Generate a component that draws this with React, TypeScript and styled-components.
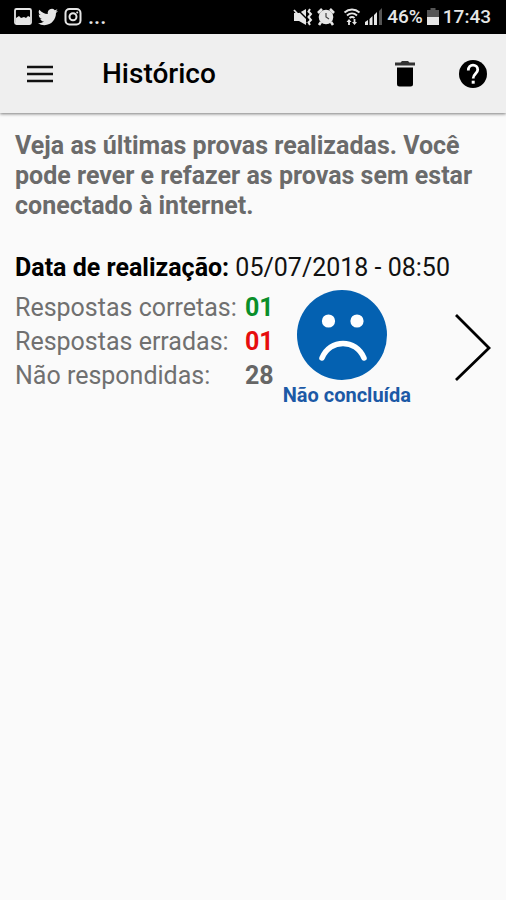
import React from 'react';
import styled, { createGlobalStyle } from 'styled-components';

const GlobalStyle = createGlobalStyle`
  *, *::before, *::after { box-sizing: border-box; }
  html, body { margin: 0; background: #fafafa; }
  body { font-family: Roboto, "Liberation Sans", sans-serif; color: #000; }
  button { font: inherit; color: inherit; background: none; border: 0; padding: 0; cursor: pointer; }
  svg { display: block; flex: none; }
`;

const Screen = styled.div`
  min-height: 100vh;
  background: #fafafa;
`;

const StatusBar = styled.div`
  display: flex;
  justify-content: space-between;
  align-items: center;
  height: 34px;
  padding: 0 15px 0 13px;
  background: #000;
  color: #e6e6e6;
  font-size: 19px;
  line-height: 34px;
  font-weight: 500;
`;

const StatusGroup = styled.div<{ $gap: number }>`
  display: flex;
  align-items: center;
  gap: ${(p) => p.$gap}px;
`;

const Ellipsis = styled.span`
  font-size: 22px;
`;

const AppBar = styled.header`
  display: flex;
  align-items: center;
  height: 79px;
  padding: 0 17px 0 24px;
  background: #efefef;
  box-shadow: 0 1px 3px rgba(0, 0, 0, 0.5);
`;

const Title = styled.h1`
  flex: 1;
  margin: 0 0 0 46px;
  font-size: 28px;
  line-height: 32px;
  font-weight: 500;
`;

const Actions = styled.div`
  display: flex;
  gap: 36px;
`;

const IconButton = styled.button`
  display: flex;
  align-items: center;
  justify-content: center;
  width: 32px;
  height: 40px;
`;

const Content = styled.main`
  padding: 18px 15px 0;
`;

const Intro = styled.p`
  margin: 0 0 32px;
  color: #6b6b6b;
  font-size: 25px;
  line-height: 30px;
  font-weight: 700;
`;

const DateLine = styled.h2`
  margin: 0;
  font-size: 25px;
  line-height: 30px;
  font-weight: 400;
  color: #111;

  strong { font-weight: 700; color: #000; }
`;

const Result = styled.section`
  display: flex;
  align-items: flex-start;
`;

const Scores = styled.dl`
  display: grid;
  grid-template-columns: 230px auto;
  margin: 8px 9px 0 0;
  font-size: 25px;
  line-height: 34px;
  white-space: nowrap;
`;

const ScoreLabel = styled.dt`
  color: #707070;
`;

const ScoreValue = styled.dd<{ $color: string }>`
  margin: 0;
  font-weight: 700;
  color: ${(p) => p.$color};
`;

const Status = styled.figure`
  display: flex;
  flex-direction: column;
  gap: 3px;
  margin: 7px 0 0;
`;

const Face = styled.svg`
  margin-left: 14px;
`;

const StatusCaption = styled.figcaption`
  color: #1c59a6;
  font-size: 20px;
  line-height: 24px;
  font-weight: 700;
  white-space: nowrap;
`;

const OpenButton = styled.button`
  margin: 29px 0 0 auto;
`;

const scores = [
  { label: 'Respostas corretas:', value: '01', color: '#0a8f2a' },
  { label: 'Respostas erradas:', value: '01', color: '#e60d0d' },
  { label: 'Não respondidas:', value: '28', color: '#666666' },
];

const PictureIcon = () => (
  <svg width="20" height="20" viewBox="0 0 20 20">
    <rect x="2" y="2" width="16" height="15" rx="1.5" fill="none" stroke="currentColor" strokeWidth="1.8" />
    <path d="M3 11l3-2 2 2 3-1 2 1 2-2 2 1v6H3z" fill="currentColor" />
  </svg>
);

const TwitterIcon = () => (
  <svg width="20" height="20" viewBox="0 0 24 24" fill="currentColor">
    <path d="M23.95 4.57a10 10 0 0 1-2.82.77 4.96 4.96 0 0 0 2.16-2.72c-.95.55-2 .96-3.13 1.18a4.92 4.92 0 0 0-8.38 4.48A13.93 13.93 0 0 1 1.64 3.16a4.93 4.93 0 0 0 1.52 6.57 4.9 4.9 0 0 1-2.23-.61v.06a4.92 4.92 0 0 0 3.95 4.83 5 5 0 0 1-2.21.08 4.94 4.94 0 0 0 4.6 3.42A9.87 9.87 0 0 1 0 19.54a13.99 13.99 0 0 0 7.55 2.21c9.05 0 14-7.5 14-13.98 0-.21 0-.42-.02-.63a9.94 9.94 0 0 0 2.42-2.57z" />
  </svg>
);

const InstagramIcon = () => (
  <svg width="20" height="20" viewBox="0 0 20 20" fill="none" stroke="currentColor" strokeWidth="2">
    <rect x="2.5" y="2" width="15" height="15.5" rx="4" />
    <circle cx="10" cy="9.8" r="3.5" />
    <circle cx="14.2" cy="5.5" r="1" fill="currentColor" stroke="none" />
  </svg>
);

const MuteIcon = () => (
  <svg width="20" height="20" viewBox="0 0 20 20" fill="none" stroke="currentColor">
    <path d="M1 6h5l7-4v16l-7-4H1z" fill="currentColor" stroke="none" />
    <path d="M3 1l11 11" stroke="#000" strokeWidth="1.4" />
    <path d="M1 3l12 13" strokeWidth="1.8" />
    <path d="M17 2l-1.500 2.500 2.500 2.500-2.500 3 2.500 3-2.500 2.500L17 18" strokeWidth="2" />
  </svg>
);

const AlarmIcon = () => (
  <svg width="18" height="20" viewBox="0 0 18 20" fill="none" stroke="currentColor">
    <path d="M1 6l4-4M17 6l-4-4M4 15l-2 3M14 15l2 3" strokeWidth="2.6" />
    <circle cx="9" cy="10" r="7.3" fill="currentColor" stroke="none" />
    <path d="M9 6v4l3 2" stroke="#444" strokeWidth="1.2" />
  </svg>
);

const WifiIcon = () => (
  <svg width="22" height="20" viewBox="-4 0 22 20" fill="none" stroke="currentColor">
    <path d="M1.5 5.5C6 1.5 12 1.5 16.5 5.5M4 8.5c3-2.6 7-2.6 10 0M6.5 11c1.5-1.2 3.5-1.2 5 0" strokeWidth="1.9" />
    <path d="M3.5 15l2.5-3 2.5 3zM9 15h5l-2.5 3z" fill="currentColor" stroke="none" />
    <path d="M6 14v4M11.5 12v4" strokeWidth="1.8" />
  </svg>
);

const SignalIcon = () => (
  <svg width="18" height="20" viewBox="0 0 18 20" fill="currentColor">
    <path d="M0 18v-3l3-2v5zM4.5 18v-6l3-3v9zM9 18V8l3-3v13z" />
    <path d="M14 18V4l3-3v17z" fill="#555" />
  </svg>
);

const BatteryIcon = () => (
  <svg width="12" height="20" viewBox="0 0 12 20">
    <path d="M3.5 1h5v2H12v7H0V3h3.5z" fill="#555" />
    <path d="M0 10h12v8H0z" fill="currentColor" />
  </svg>
);

const MenuIcon = () => (
  <svg width="26" height="20" viewBox="0 0 26 20" stroke="#111" strokeWidth="2.3">
    <path d="M0 3h26M0 10h26M0 17h26" />
  </svg>
);

const TrashIcon = () => (
  <svg width="22" height="28" viewBox="0 0 22 28">
    <path d="M1 2.5h5.5L8 1h6l1.5 1.5H21v3H1z" fill="#333" />
    <path d="M3 7.5h16V24a2.5 2.5 0 0 1-2.5 2.5h-11A2.5 2.5 0 0 1 3 24z" />
  </svg>
);

const HelpIcon = () => (
  <svg width="30" height="30" viewBox="0 0 30 30">
    <circle cx="15" cy="15" r="14" />
    <path d="M10.3 11.5C10.3 8 12.5 6.2 15 6.2s4.700 1.700 4.700 4.500C19.700 14.500 15.200 14.500 15.200 19.500" fill="none" stroke="#fff" strokeWidth="2.8" />
    <path d="M13.7 21.700h3v3h-3z" fill="#fff" />
  </svg>
);

const SadFace = () => (
  <Face width="90" height="90" viewBox="0 0 90 90" role="img" aria-label="Rosto triste">
    <circle cx="45" cy="45" r="45" fill="#0461b1" />
    <circle cx="31.5" cy="31" r="6.6" fill="#fff" />
    <circle cx="60" cy="31" r="6.6" fill="#fff" />
    <path d="M25 68C33 48.5 59 48.5 67 68" fill="none" stroke="#fff" strokeWidth="5.5" strokeLinecap="round" />
  </Face>
);

const ChevronIcon = () => (
  <svg width="38" height="70" viewBox="0 0 38 70">
    <path d="M3 3l33 33L3 68" fill="none" stroke="#000" strokeWidth="2.8" />
  </svg>
);

export default function App() {
  return (
    <Screen>
      <GlobalStyle />
      <StatusBar>
        <StatusGroup $gap={5}>
          <PictureIcon />
          <TwitterIcon />
          <InstagramIcon />
          <Ellipsis>...</Ellipsis>
        </StatusGroup>
        <StatusGroup $gap={4}>
          <MuteIcon />
          <AlarmIcon />
          <WifiIcon />
          <SignalIcon />
          <span>46%</span>
          <BatteryIcon />
          <span>17:43</span>
        </StatusGroup>
      </StatusBar>
      <AppBar>
        <IconButton type="button" aria-label="Menu">
          <MenuIcon />
        </IconButton>
        <Title>Histórico</Title>
        <Actions>
          <IconButton type="button" aria-label="Excluir">
            <TrashIcon />
          </IconButton>
          <IconButton type="button" aria-label="Ajuda">
            <HelpIcon />
          </IconButton>
        </Actions>
      </AppBar>
      <Content>
        <Intro>
          Veja as últimas provas realizadas. Você pode rever e refazer as provas sem estar conectado à internet.
        </Intro>
        <DateLine>
          <strong>Data de realização:</strong> 05/07/2018 - 08:50
        </DateLine>
        <Result>
          <Scores>
            {scores.map((s) => (
              <React.Fragment key={s.label}>
                <ScoreLabel>{s.label}</ScoreLabel>
                <ScoreValue $color={s.color}>{s.value}</ScoreValue>
              </React.Fragment>
            ))}
          </Scores>
          <Status>
            <SadFace />
            <StatusCaption>Não concluída</StatusCaption>
          </Status>
          <OpenButton type="button" aria-label="Abrir prova">
            <ChevronIcon />
          </OpenButton>
        </Result>
      </Content>
    </Screen>
  );
}
